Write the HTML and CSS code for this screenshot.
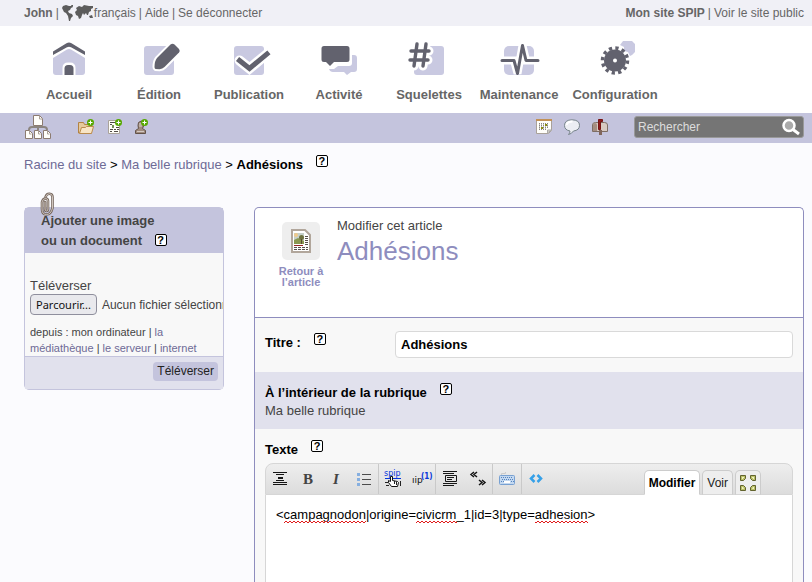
FILE: index.html
```html
<!DOCTYPE html>
<html lang="fr">
<head>
<meta charset="utf-8">
<title>Adhésions - Mon site SPIP</title>
<link rel="stylesheet" href="styles.css">
</head>
<body>
<header>
  <div class="topbar">
    <div class="topbar-group">
      <a href="#"><strong>John</strong></a><span>|</span>
      <a href="#" class="lang"><svg class="world" width="32" height="16" viewBox="0 0 32 16" aria-hidden="true"><path fill="#5c5c5c" d="M1 1l3-1 3 1 3-1 1 2-2 1-1 2-2 1 1 2 3 1 1 2-2 2-1 3-1 0-1-5-2-3-2-1-1-2-1-2zM14 3l3-2 3 1 2-2 5 1 4 0 0 2-2 1 0 2-2 1-1 3-1 0-1-2-2 2-1-2-1 2-1 3-2 1-1-3-2-1-1-3 2-2zM27 11l3-1 1 3-3 0zM9 0l2 0 0 1-1 1z"/></svg>français</a><span>|</span>
      <a href="#">Aide</a><span>|</span>
      <a href="#">Se déconnecter</a>
    </div>
    <div class="topbar-group">
      <a href="#"><strong>Mon site SPIP</strong></a><span>|</span>
      <a href="#">Voir le site public</a>
    </div>
  </div>
  <nav class="mainnav">
    <a href="#"><svg class="navicon" viewBox="0 0 40 36" aria-hidden="true"><path class="soft" d="M4 18l14-8.500q2-1 4 0L36 18v14q0 3-3 3H7q-3 0-3-3z"/><path class="dark" d="M4 15v-3.500L17.500 3.200q2.500-1.200 5 0L36 11.500V15L22 7.200q-2-1-4 0z"/><path d="M13.500 35v-7q0-5.500 5.500-5.500h2q5.500 0 5.500 5.500v7z" fill="#fff"/><path class="dark" d="M15.500 35v-6.500q0-3.500 3.500-3.500h2q3.500 0 3.500 3.500V35z"/></svg>Accueil</a>
    <a href="#"><svg class="navicon" viewBox="0 0 40 36" aria-hidden="true"><rect class="soft" x="5" y="6" width="30" height="29" rx="3"/><path d="M31.500 4.500q2-1.500 4 0l4.500 4.500q1.500 2 0 3.500L25.500 27q-2 2-5 2.300l-4-.3q-1-.5-1-2 0-6 2.500-9z" fill="#62626e" stroke="#fff" stroke-width="4" paint-order="stroke"/></svg>Édition</a>
    <a href="#"><svg class="navicon" viewBox="0 0 40 36" aria-hidden="true"><rect class="soft" x="5" y="6" width="30" height="29" rx="3"/><path d="M10.500 20.500l10 8L38 14" fill="none" stroke="#fff" stroke-width="10" stroke-linecap="round"/><path d="M10.500 20.500l10 8L38 14" fill="none" stroke="#62626e" stroke-width="5" stroke-linecap="square"/></svg>Publication</a>
    <a href="#"><svg class="navicon" viewBox="0 0 40 36" aria-hidden="true"><path class="soft" d="M33 15h2q3 0 3 3v11q0 3-3 3h-3l-4 3-3-3H14q-3 0-4-3h5l4-3h11q3 0 3-3z"/><path class="dark" d="M5 6h23q2.500 0 2.500 2.500v11q0 2.500-2.500 2.500H15l-4 4-4-4H5q-2.500 0-2.500-2.500v-11Q2.500 6 5 6z"/></svg>Activité</a>
    <a href="#"><svg class="navicon" viewBox="0 0 40 36" aria-hidden="true"><rect class="soft" x="5" y="6" width="30" height="29" rx="3"/><g fill="none" stroke-linecap="round"><path d="M8 4L5 26M17 4l-3 22M2 11h18M1 20h18" stroke="#fff" stroke-width="9"/><path d="M8 4L5 26M17 4l-3 22M2 11h18M1 20h18" stroke="#62626e" stroke-width="3.400"/></g></svg>Squelettes</a>
    <a href="#"><svg class="navicon" viewBox="0 0 40 36" aria-hidden="true"><rect class="soft" x="5" y="6" width="30" height="29" rx="5"/><path d="M3 20.500h12l3.500 13 5-28 3.500 15h12" fill="none" stroke="#fff" stroke-width="8"/><path class="line" d="M3 20.500h12l3.500 13 5-28 3.500 15h12" stroke-width="3"/></svg>Maintenance</a>
    <a href="#"><svg class="navicon" viewBox="0 0 40 36" aria-hidden="true"><path class="soft" d="M28 1h9l3 3v8l-3 3-2 1-2-4-4-1v-4l-4-2z"/><circle cx="20" cy="20.500" r="11" class="dark"/><circle cx="20" cy="20.500" r="12.500" fill="none" stroke="#62626e" stroke-width="3.500" stroke-dasharray="3.270 3.270"/><circle cx="20" cy="20.500" r="2" fill="#fff"/></svg>Configuration</a>
  </nav>
  <div class="toolsbar">
    <div class="shortcuts">
      <a href="#" class="sitemap" aria-label="Plan du site"><svg width="26" height="26" viewBox="0 0 26 26"><path d="M13 12v4M4 16q0-3 3-3h12q3 0 3 3" fill="none" stroke="#8c8580" stroke-width="2"/><g fill="#fffefa" stroke="#8c7b70"><path d="M8.500 1.500h6l3 3v7h-9zM.5 16.500h4l3 3v5h-7zM9.500 16.500h4l3 3v5h-7zM18.500 16.500h4l3 3v5h-7z"/><path d="M14.500 2v3h3M4.500 17v3h2M13.500 17v3h2M22.500 17v3h2" fill="none" stroke="#aaa096"/></g></svg></a>
      <a href="#" aria-label="Créer une rubrique"><svg width="16" height="16" viewBox="0 0 16 16"><path d="M.5 14V3.500h5l1 2h7V14z" fill="#e5c99d" stroke="#b38342"/><path d="M1.500 14.500l2-6h4l1-1h7l-2 7z" fill="#f8e5c5" stroke="#ba8b4d"/><circle cx="12.500" cy="3.500" r="3.500" fill="#56a800"/><path d="M12.500 1.500v4M10.500 3.500h4" stroke="#fff"/></svg></a>
      <a href="#" aria-label="Écrire un article"><svg width="16" height="16" viewBox="0 0 16 16"><path d="M2.500 1.500h11v13h-11z" fill="#fffef8" stroke="#aaa39a"/><path d="M4 3.500h5M4 5.500h2M4 10.500h3M8 10.500h2M11 10.500h2M4 12.500h2M8 12.500h4M10 8.500h3" stroke="#514b46"/><path d="M6 8.500V6h2v3H6z" fill="#779057"/><circle cx="12.500" cy="3.500" r="3.500" fill="#56a800"/><path d="M12.500 1.500v4M10.500 3.500h4" stroke="#fff"/></svg></a>
      <a href="#" aria-label="Créer un auteur"><svg width="16" height="16" viewBox="0 0 16 16"><path d="M1.500 14.500v-3l3-2q-1-3 0-6 3-3 5 0 1 3-1 6l3 2v3z" fill="#a08b7e" stroke="#625248"/><path d="M5 4h3v4H5z" fill="#bdaea4"/><path d="M3 12.500h7" stroke="#d3c9c3"/><circle cx="10.500" cy="3.500" r="3.500" fill="#56a800"/><path d="M10.500 1.500v4M8.500 3.500h4" stroke="#fff"/></svg></a>
    </div>
    <div class="utilities">
      <a href="#" aria-label="Agenda"><svg width="16" height="16" viewBox="0 0 16 16"><path d="M.5.500h15v11l-3 3H.5z" fill="#fffefa" stroke="#a9a199"/><path d="M0 1h16" stroke="#c29156" stroke-width="2"/><path d="M3 4.500h10M3 6.500h10M3 8.500h10M3 10.500h7" stroke="#89837f" stroke-dasharray="1 1"/><path d="M3.500 4v7M5.500 4v7M7.500 4v7M9.500 4v7M11.500 4v5" stroke="#89837f" stroke-opacity=".5"/><path d="M9 5h2v2H9zM5 8h2v2H5z" fill="#8a8a10"/><path d="M11.500 14v-3h4z" fill="#ddd6cc" stroke="#aaa"/></svg></a>
      <a href="#" aria-label="Messagerie"><svg width="16" height="16" viewBox="0 0 16 16"><path d="M6 12Q.5 11 .5 6.500.5 1 8 .8q7.500.2 7.500 5.500 0 5-6 5.700-2 3-5 3.500Q6 14 6 12z" fill="#eceef3" stroke="#77848a"/><path d="M2.500 6q1-3.500 6-3.500" fill="none" stroke="#fff" stroke-width="2"/></svg></a>
      <a href="#" aria-label="Suivi"><svg width="16" height="16" viewBox="0 0 16 16"><path d="M.5 12.500V6q0-2.500 3-2.500h9q3 0 3 2.500v6.500z" fill="#d8cac2" stroke="#7e6e64"/><path d="M1 12V6q0-2 2-2t2 2v6z" fill="#a58e81"/><path d="M7 11h3v5H7z" fill="#81665b"/><path d="M6.500 10.500v-10h4v2h-2v8z" fill="#8e1b1b" stroke="#771313"/></svg></a>
      <form class="search"><input type="search" aria-label="Rechercher" placeholder="Rechercher"><button type="button" aria-label="Lancer la recherche"><svg width="20" height="18" viewBox="0 0 20 18"><circle cx="8" cy="7.500" r="5.500" fill="#aaa" stroke="#fff" stroke-width="2.500"/><path d="M12 11.500l6 4.500" stroke="#fff" stroke-width="3"/></svg></button></form>
    </div>
  </div>
</header>

<nav class="breadcrumb"><span><a href="#">Racine du site</a> &gt; <a href="#">Ma belle rubrique</a> &gt; <strong>Adhésions</strong></span><a href="#" class="help">?</a></nav>

<div class="page">
  <aside class="upload">
    <svg class="clip" width="15" height="25" viewBox="0 0 15 25" aria-hidden="true"><g fill="none" stroke-linecap="round"><path id="clip-wire" d="M5 10v7q0 2 1.500 2T8 17V9Q8 6.500 5.500 6.500T2 10v7q0 5.500 4.500 5.500T12.500 16V5q0-3-3-3.300Q6.500 1.500 5.500 5" stroke="#75665d" stroke-width="2.600"/><path d="M5 10v7q0 2 1.500 2T8 17V9Q8 6.500 5.500 6.500T2 10v7q0 5.500 4.500 5.500T12.500 16V5q0-3-3-3.300Q6.500 1.500 5.500 5" stroke="#cfc5bd"/></g></svg>
    <h2>Ajouter une image<br>ou un document <a href="#" class="help">?</a></h2>
    <form>
      <div class="upload-body">
        <label for="fichier">Téléverser</label>
        <div class="filepicker"><input type="file" id="fichier"><label for="fichier" class="browse">Parcourir...</label><span>Aucun fichier sélectionné.</span></div>
        <p>depuis : mon ordinateur | <a href="#">la médiathèque</a> | <a href="#">le serveur</a> | <a href="#">internet</a></p>
      </div>
      <div class="upload-foot"><button type="button">Téléverser</button></div>
    </form>
  </aside>

  <main class="editor">
    <div class="editor-head">
      <a href="#" class="back"><span class="back-icon"><svg width="22" height="26" viewBox="0 0 22 26" aria-hidden="true"><path d="M2 2h13l5 5v17H2z" fill="#fff" stroke="#b1a69b" stroke-width="2"/><path d="M4 5h10v11H4z" fill="#c6d0c9"/><path d="M4 12l4-2 6 3v3H4z" fill="#8a9851"/><circle cx="11.500" cy="9.500" r="2.500" fill="#6d713f"/><path d="M11.500 11v5" stroke="#594b31"/><circle cx="6" cy="7" r="2" fill="#efc98b"/><path d="M4 17.500h9" stroke="#952222"/><path d="M15 8.500h3M15 10.500h3M15 12.500h3M15 14.500h3M15 16.500h3M4 19.500h14M4 21.500h14" stroke="#57504c" stroke-dasharray="3 1"/></svg></span>Retour à l’article</a>
      <div><div>Modifier cet article</div><h1>Adhésions</h1></div>
    </div>
    <form class="fields">
      <div class="field title-field"><div class="caption"><label for="titre">Titre :</label><a href="#" class="help">?</a></div><input id="titre" type="text" value="Adhésions" spellcheck="false"></div>
      <div class="field parent-field"><div class="caption"><strong>À l’intérieur de la rubrique</strong><a href="#" class="help">?</a></div><div>Ma belle rubrique</div></div>
      <div class="field text-field">
        <div class="caption"><label for="texte">Texte</label><a href="#" class="help">?</a></div>
        <div class="markbox">
          <div class="toolbar">
            <div class="tools">
              <button type="button" aria-label="Intertitre"><svg viewBox="0 0 16 16"><path d="M1 1.500h14M4 3.500h8M1 11.500h14M1 13.500h14M4 9.500h8" stroke="#151515"/><path d="M6 7h5" stroke="#151515" stroke-width="2"/></svg></button>
              <button type="button" class="bold">B</button>
              <button type="button" class="italic">I</button>
              <button type="button" aria-label="Liste"><svg viewBox="0 0 16 16"><path d="M6 3.500h9M6 8.500h9M6 13.500h9" stroke="#4c4c4c"/><path fill="#86afe0" d="M1 2h3v3H1zM1 7h3v3H1zM1 12h3v3H1z"/></svg></button>
              <button type="button" class="sep" aria-label="Lien"><svg viewBox="0 0 16 16"><text x="-1" y="5" font-size="8" fill="#0636db" font-family="DejaVu Sans">spip</text><path d="M0 7.500h16" stroke="#0636db"/><path d="M5.500 5.500v5l-2-1v2l3 4h6l1-4-1-1-5-1v-4z" fill="#fff" stroke="#111"/><path d="M0 11.500h3M1 14.500h3M9.500 10v3M11.500 11v3M15.500 10v5" stroke="#222"/></svg></button>
              <button type="button" aria-label="Note"><svg viewBox="0 0 16 16"><text x="-1" y="12" font-size="9" fill="#111" font-family="DejaVu Sans">ıip</text><text x="8" y="8" font-size="8" fill="#0636db" font-weight="bold" font-family="DejaVu Sans Condensed">(1)</text></svg></button>
              <button type="button" class="sep" aria-label="Citation"><svg viewBox="0 0 16 16"><path d="M1 .5h14M1 2.500h11M1 12.500h14M1 14.500h11M5 6.500h7M5 8.500h5" stroke="#171717"/><path d="M3.500 4.500h11v6h-11z" fill="none" stroke="#171717"/></svg></button>
              <button type="button" aria-label="Guillemets"><svg viewBox="0 0 16 16"><path d="M4 1L1 3.500 4 6M7 1L4 3.500 7 6M9 9l3 2.500L9 14M12 9l3 2.500-3 2.500" fill="none" stroke="#151515" stroke-width="1.500"/></svg></button>
              <button type="button" class="sep" aria-label="Clavier"><svg viewBox="0 0 16 16"><rect x=".5" y="4.500" width="15" height="9" rx="1" fill="#c3d8f0" stroke="#78a1d2"/><path d="M2 6.500h12M3 8.500h12M2 10.500h3M12 10.500h3" stroke="#5684bf" stroke-dasharray="1 1"/><path d="M5 11h6" stroke="#fff" stroke-width="2"/><path d="M2.500 4V2.500h4V1" fill="none" stroke="#ccc"/></svg></button>
              <button type="button" class="sep" aria-label="Code"><svg viewBox="0 0 16 16"><path d="M6.500 4L3 7.500 6.500 11M9.500 4L13 7.500 9.500 11" fill="none" stroke="#35a0e8" stroke-width="2.500"/></svg></button>
            </div>
            <div class="tabs">
              <button type="button" class="active">Modifier</button>
              <button type="button">Voir</button>
              <button type="button" class="full" aria-label="Plein écran"><svg width="16" height="16" viewBox="0 0 16 16"><g fill="#b9bf68" stroke="#62632d"><path d="M.5.500h5v3l-2 2h-3zM10.500.500h5v5h-3l-2-2zM.5 10.500h3l2 2v3h-5zM12.500 10.500h3v5h-5v-3z"/></g><path d="M2 2h2v1H3v1H2zM12 2h2v2h-1V3h-1zM2 12h1l1 2H2zM13 12h1v2h-2z" fill="#eef0b8"/></svg></button>
            </div>
          </div>
          <div class="textzone">
            <textarea id="texte" spellcheck="false">&lt;campagnodon|origine=civicrm_1|id=3|type=adhesion&gt;</textarea>
            <svg class="spelling" width="320" height="4" aria-hidden="true"><defs><pattern id="wave" width="4" height="4" patternUnits="userSpaceOnUse"><path d="M0 3L2 1l2 2" fill="none" stroke="#e01b1b"/></pattern></defs><path fill="url(#wave)" d="M8 0h82v4H8zM140 0h41v4h-41zM259 0h53v4h-53z"/></svg>
          </div>
        </div>
      </div>
    </form>
  </main>
</div>
</body>
</html>
```
FILE: styles.css
```css
* { box-sizing: border-box; }
body {
  margin: 0;
  height: 100vh;
  display: flex;
  flex-direction: column;
  background: #fbfbfe;
  color: #444;
  font: 13px/18px "Liberation Sans", Arial, sans-serif;
}
a { color: #6e6a96; text-decoration: none; }
button, input, textarea { font: inherit; color: inherit; margin: 0; }
h1, h2, p { margin: 0; font-weight: normal; }

.topbar {
  display: flex;
  justify-content: space-between;
  align-items: center;
  height: 26px;
  padding: 0 8px 0 24px;
  background: #f0f0f6;
  font-size: 12px;
  color: #666;
}
.topbar a { color: #666; }
.topbar-group { display: flex; gap: 3px; }
.lang { display: flex; }
.world { margin-top: 1px; }

.mainnav {
  display: grid;
  grid-template-columns: repeat(6, 90px) 102px;
  padding: 14px 24px 9px;
  background: #fff;
}
.mainnav a {
  display: flex;
  flex-direction: column;
  align-items: center;
  gap: 10px;
  color: #666;
  font-weight: bold;
}
.navicon { width: 40px; height: 36px; overflow: visible; }
.soft { fill: #c9c9e1; }
.dark { fill: #62626e; }
.line { fill: none; stroke: #62626e; stroke-linecap: round; stroke-linejoin: round; }

.toolsbar {
  display: flex;
  justify-content: space-between;
  height: 30px;
  padding: 0 8px 2px 25px;
  background: #c4c4dd;
}
.shortcuts, .utilities { display: flex; align-items: center; gap: 12px; }
.toolsbar svg { display: block; }
.sitemap { margin-right: 15px; }
.search {
  display: flex;
  align-items: center;
  align-self: flex-end;
  width: 170px;
  height: 22px;
  margin: 0 0 3px 14px;
  padding: 0 2px 1px 3px;
  border: 1px solid #999;
  border-radius: 3px;
  background: #757575;
}
.search input {
  flex: 1;
  min-width: 0;
  padding: 0;
  border: 0;
  outline: 0;
  background: none;
  font-size: 12px;
  color: #ddd;
}
.search input::placeholder { color: #ddd; }
.search button { padding: 0; border: 0; background: none; }

.help {
  width: 12px;
  height: 12px;
  border: 1px solid #000;
  border-radius: 2px;
  background: #fff;
  color: #000;
  font: bold 11px/10px "Liberation Sans", Arial, sans-serif;
  text-align: center;
}

.breadcrumb {
  display: flex;
  gap: 13px;
  padding: 12px 24px 0;
  color: #000;
}
.breadcrumb span { line-height: 19px; }

.page {
  flex: 1;
  min-height: 0;
  display: grid;
  grid-template-columns: 200px 1fr;
  gap: 30px;
  padding: 33px 8px 0 24px;
}

.upload {
  position: relative;
  align-self: start;
  border: 1px solid #c4c4dd;
  border-radius: 5px;
  background: #f8f8f8;
}
.clip { position: absolute; left: 15px; top: -16px; }
.upload h2 {
  padding: 3px 16px 2px;
  background: #c4c4dd;
  font-size: 13px;
  line-height: 20px;
  font-weight: bold;
}
.upload h2 .help { display: inline-block; margin-left: 9px; vertical-align: 1px; }
.upload-body { padding: 24px 5px 0; overflow: hidden; }
.upload-body label { display: block; line-height: 17px; }
.filepicker { display: flex; align-items: center; gap: 5px; font-size: 12px; white-space: nowrap; }
.filepicker input { position: absolute; opacity: 0; width: 1px; height: 1px; }
.filepicker .browse {
  padding: 1px 5px;
  border: 1px solid #8f8f9d;
  border-radius: 4px;
  background: #e9e9ed;
  color: #111;
  font: 11px/17px "Noto Sans", sans-serif;
}
.upload p { padding-top: 9px; font-size: 11px; line-height: 16px; }
.upload-foot {
  display: flex;
  justify-content: flex-end;
  padding: 5px 5px 8px;
  border-top: 1px solid #c4c4dd;
  background: #e1e1ed;
}
.upload-foot button {
  padding: 0 4px;
  border: 0;
  border-radius: 4px;
  background: #c4c4dd;
  color: #222;
  font-size: 12px;
  line-height: 19px;
}

.editor {
  display: flex;
  flex-direction: column;
  min-height: 0;
  border: 1px solid #8e8dbe;
  border-bottom: 0;
  border-radius: 5px 5px 0 0;
  background: #f8f8f8;
}
.editor-head {
  display: flex;
  gap: 10px;
  min-height: 110px;
  padding: 9px 20px;
  border-bottom: 1px solid #8e8dbe;
  border-radius: 5px 5px 0 0;
  background: #fff;
}
.back {
  display: flex;
  flex-direction: column;
  align-items: center;
  width: 52px;
  padding-top: 5px;
  color: #8e8dbe;
  font-size: 11px;
  line-height: 11px;
  font-weight: bold;
  text-align: center;
}
.back-icon {
  display: grid;
  place-items: center;
  width: 38px;
  height: 38px;
  margin-bottom: 6px;
  border-radius: 5px;
  background: #eee;
}
h1 { color: #8e8dbe; font-size: 26px; line-height: 32px; }

.fields { flex: 1; min-height: 0; display: flex; flex-direction: column; }
.field { padding: 0 10px; }
.caption { display: flex; gap: 13px; color: #000; font-weight: bold; }
.title-field { display: flex; height: 54px; padding-top: 13px; }
.title-field .caption { flex: 0 0 130px; padding-top: 2px; }
.title-field input {
  flex: 1;
  min-width: 0;
  height: 27px;
  padding: 0 5px;
  border: 1px solid #d9d9d9;
  border-radius: 4px;
  background: #fff;
  color: #000;
  font-weight: bold;
}
.parent-field { height: 57px; padding-top: 11px; background: #e1e1ed; }
.text-field { flex: 1; min-height: 0; display: flex; flex-direction: column; padding-top: 11px; }
.text-field .caption { padding-bottom: 4px; }
.caption label, .caption strong { line-height: 19px; }

.markbox { flex: 1; min-height: 0; display: flex; flex-direction: column; }
.toolbar {
  display: flex;
  justify-content: space-between;
  align-items: flex-end;
  height: 32px;
  padding-right: 31px;
  border: 1px solid #d6d6d6;
  border-radius: 8px 8px 0 0;
  background: linear-gradient(#eee, #dcdcdc);
}
.tools { display: flex; height: 30px; }
.tools button {
  display: grid;
  place-items: center;
  width: 28px;
  padding: 0;
  border: 0;
  background: none;
  color: #444;
}
.tools .sep { width: 29px; border-left: 1px solid #c9c9c9; }
.tools svg { width: 16px; height: 16px; overflow: visible; }
.tools .bold { font: bold 15px/18px "Liberation Serif", serif; }
.tools .italic { font: italic bold 15px/18px "Liberation Serif", serif; }
.tabs { display: flex; gap: 2px; margin-bottom: -1px; }
.tabs button {
  height: 25px;
  padding: 0 4px;
  border: 1px solid #ccc;
  border-bottom-color: #d6d6d6;
  border-radius: 5px 5px 0 0;
  background: #eee;
  color: #222;
  font-size: 12px;
}
.tabs .active { border-bottom-color: #fff; background: #fff; color: #000; font-weight: bold; }
.tabs svg { display: block; }
.textzone { position: relative; flex: 1; min-height: 0; display: flex; }
textarea {
  flex: 1;
  min-width: 0;
  padding: 11px 10px;
  border: 1px solid #d6d6d6;
  border-width: 0 1px;
  outline: 0;
  resize: none;
  background: #fff;
  color: #000;
}
.spelling { position: absolute; left: 11px; top: 25px; }
```
